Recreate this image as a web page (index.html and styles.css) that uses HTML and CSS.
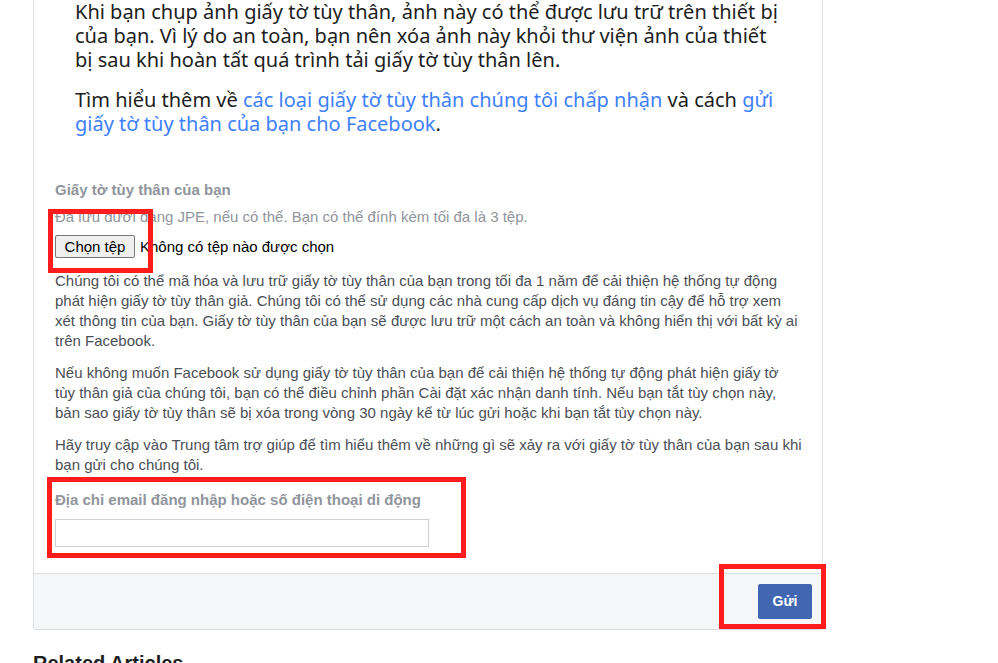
FILE: index.html
```html
<!DOCTYPE html>
<html lang="vi">
<head>
<meta charset="utf-8">
<title>Giấy tờ tùy thân</title>
<link rel="stylesheet" href="styles.css">
</head>
<body>
<div class="page">
  <div class="card">
    <div class="intro">
      <p>Khi bạn chụp ảnh giấy tờ tùy thân, ảnh này có thể được lưu trữ trên thiết bị của bạn. Vì lý do an toàn, bạn nên xóa ảnh này khỏi thư viện ảnh của thiết bị sau khi hoàn tất quá trình tải giấy tờ tùy thân lên.</p>
      <p>Tìm hiểu thêm về <a href="#">các loại giấy tờ tùy thân chúng tôi chấp nhận</a> và cách <a href="#">gửi giấy tờ tùy thân của bạn cho Facebook</a>.</p>
    </div>
    <div class="form">
      <div class="label">Giấy tờ tùy thân của bạn</div>
      <div class="hint">Đã lưu dưới dạng JPE, nếu có thể. Bạn có thể đính kèm tối đa là 3 tệp.</div>
      <div class="file-row"><span class="file-btn">Chọn tệp</span><span class="file-name">Không có tệp nào được chọn</span></div>
      <p class="info">Chúng tôi có thể mã hóa và lưu trữ giấy tờ tùy thân của bạn trong tối đa 1 năm để cải thiện hệ thống tự động phát hiện giấy tờ tùy thân giả. Chúng tôi có thể sử dụng các nhà cung cấp dịch vụ đáng tin cậy để hỗ trợ xem xét thông tin của bạn. Giấy tờ tùy thân của bạn sẽ được lưu trữ một cách an toàn và không hiển thị với bất kỳ ai trên Facebook.</p>
      <p class="info">Nếu không muốn Facebook sử dụng giấy tờ tùy thân của bạn để cải thiện hệ thống tự động phát hiện giấy tờ tùy thân giả của chúng tôi, bạn có thể điều chỉnh phần Cài đặt xác nhận danh tính. Nếu bạn tắt tùy chọn này, bản sao giấy tờ tùy thân sẽ bị xóa trong vòng 30 ngày kể từ lúc gửi hoặc khi bạn tắt tùy chọn này.</p>
      <p class="info info-last">Hãy truy cập vào Trung tâm trợ giúp để tìm hiểu thêm về những gì sẽ xảy ra với giấy tờ tùy thân của bạn sau khi bạn gửi cho chúng tôi.</p>
      <div class="label email-label">Địa chỉ email đăng nhập hoặc số điện thoại di động</div>
      <div class="input"></div>
    </div>
    <div class="footer">
      <span class="submit">Gửi</span>
    </div>
  </div>
  <h2 class="related">Related Articles</h2>

  <div class="mark mark-file"></div>
  <div class="mark mark-email"></div>
  <div class="mark mark-submit"></div>
</div>
</body>
</html>
```

FILE: styles.css
```css
html, body {
  margin: 0;
  padding: 0;
  background: #fff;
  overflow: hidden;
}
.page {
  position: relative;
  padding-left: 33px;
  width: 790px;
}
.card {
  border: 1px solid #dddfe2;
  border-top: none;
  border-radius: 0 0 3px 3px;
  background: #fff;
}
.intro {
  padding: 0 35px 0 41px;
  font-family: "Noto Sans", "Open Sans", sans-serif;
  font-size: 20px;
  line-height: 24px;
  color: #1c1e21;
}
.intro p {
  margin: 0 0 16px 0;
}
.intro p:last-child {
  margin-bottom: 0;
}
.intro a {
  color: #4080ff;
  text-decoration: none;
}
.form {
  padding: 44px 21px 26px 21px;
  font-family: "Liberation Sans", Arial, sans-serif;
  font-size: 15px;
  color: #4b4f56;
}
.label {
  font-weight: bold;
  color: #90949c;
  font-size: 15px;
  line-height: 20px;
}
.hint {
  margin-top: 8px;
  color: #90949c;
  font-size: 15px;
  line-height: 18px;
}
.file-row {
  display: flex;
  align-items: center;
  margin-top: 9px;
  font-family: "Liberation Sans", Arial, sans-serif;
  font-size: 15px;
  color: #000;
}
.file-btn {
  display: inline-block;
  box-sizing: border-box;
  width: 80px;
  height: 23px;
  line-height: 21px;
  text-align: center;
  background: #efefef;
  border: 1px solid #767676;
  border-radius: 2px;
  color: #000;
}
.file-name {
  margin-left: 5px;
}
.info {
  margin: 13px 0 0 0;
  line-height: 20px;
}
.info + .info {
  margin-top: 12px;
}
.info-last {
  margin-right: -6px;
}
.email-label {
  margin-top: 15px;
}
.input {
  margin-top: 9px;
  box-sizing: border-box;
  width: 374px;
  height: 28px;
  border: 1px solid #ccd0d5;
  background: #fff;
}
.footer {
  border-top: 1px solid #dddfe2;
  background: #f5f6f7;
  padding: 10px 10px 10px 10px;
  display: flex;
  justify-content: flex-end;
  border-radius: 0 0 3px 3px;
}
.submit {
  display: inline-block;
  box-sizing: border-box;
  width: 54px;
  height: 35px;
  line-height: 35px;
  text-align: center;
  background: #4267b2;
  border-radius: 2px;
  color: #fff;
  font-family: "Liberation Sans", Arial, sans-serif;
  font-weight: bold;
  font-size: 14px;
}
.related {
  margin: 22px 0 0 0;
  font-family: "Liberation Sans", Arial, sans-serif;
  font-size: 20px;
  font-weight: bold;
  color: #1c1e21;
}
.mark {
  position: absolute;
  box-sizing: border-box;
  border: 5px solid #ff1c1c;
}
.mark-file {
  left: 48px;
  top: 209px;
  width: 105px;
  height: 64px;
}
.mark-email {
  left: 47px;
  top: 477px;
  width: 419px;
  height: 81px;
}
.mark-submit {
  left: 719px;
  top: 564px;
  width: 107px;
  height: 65px;
}
```
